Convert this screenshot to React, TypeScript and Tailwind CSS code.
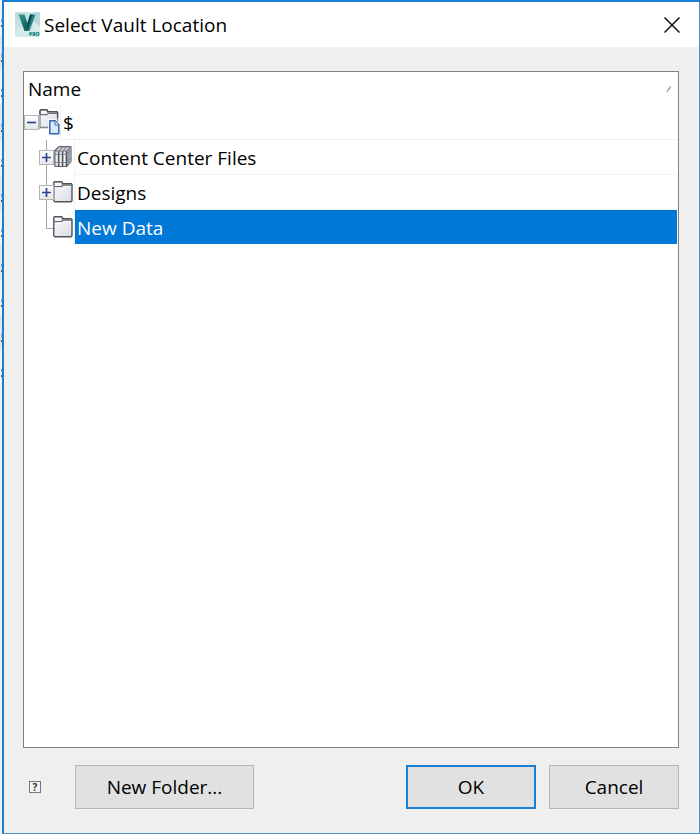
import { useState } from 'react';

type IconKind = 'vault' | 'library' | 'folder';

interface FolderNode {
  id: string;
  label: string;
  icon: IconKind;
  expandable: boolean;
}

const folders: FolderNode[] = [
  { id: 'content-center', label: 'Content Center Files', icon: 'library', expandable: true },
  { id: 'designs', label: 'Designs', icon: 'folder', expandable: true },
  { id: 'new-data', label: 'New Data', icon: 'folder', expandable: false },
];

const backgroundRows = Array.from({ length: 11 }, (_, index) => index);

function VaultLogo() {
  return (
    <svg width="25" height="25" viewBox="0 0 25 25" aria-hidden="true" className="shrink-0">
      <defs>
        <linearGradient id="logo-bg" x1="0" y1="0" x2="1" y2="1">
          <stop offset="0" stopColor="#b9dcdd" />
          <stop offset="1" stopColor="#e0f0f0" />
        </linearGradient>
        <linearGradient id="logo-left" x1="0" y1="0" x2="1" y2="1">
          <stop offset="0" stopColor="#31a09a" />
          <stop offset="1" stopColor="#0d4a4c" />
        </linearGradient>
      </defs>
      <rect width="25" height="25" fill="url(#logo-bg)" />
      <path d="M0 19 9 15 25 20V25H0Z" fill="#d3eaea" />
      <path d="M20 0H25V14L18 9Z" fill="#b3d9da" />
      <path d="M3.5 2.5H9.5L13 13 12.5 19H9.5Z" fill="url(#logo-left)" />
      <path d="M15 2.5H20.5L14.5 19H9.5Z" fill="#24837f" />
      <path d="M15 2.5H17.5L13 17 10.5 18.5Z" fill="#0d4a4c" />
      <text x="14" y="24" fontSize="5" fontWeight="800" fill="#087f83" fontFamily="Open Sans, sans-serif">
        PRO
      </text>
    </svg>
  );
}

function TreeIcon({ kind }: { kind: IconKind }) {
  if (kind === 'library') {
    return (
      <svg width="21" height="23" viewBox="0 0 21 23" aria-hidden="true" className="shrink-0">
        <path d="M1.8 4.5 6 .7H17.5L18 1.2V15.5L13.5 20.5H2.3L1.8 20Z" fill="#d3d5da" stroke="#62656e" strokeWidth="1.2" strokeLinejoin="round" />
        <path d="M13.5 5 18 1.2V15.5L13.5 20.5Z" fill="#9da0a8" />
        <path d="M5.7 5V20.5M9.6 5V20.5M13.5 5V20.5" stroke="#50535b" strokeWidth="1.3" />
        <path d="M2 5 6 1M5.7 5 10 1M9.6 5 13.8 1M13.5 5 17.8 1" stroke="#62656e" strokeWidth="1" />
        <path d="M2 5H13.5" stroke="#777a82" strokeWidth="1" />
        <path d="M3.7 7.5V18.5M7.6 7.5V18.5M11.5 7.5V18.5" stroke="#f4f5f7" strokeWidth="1" />
        <path d="M2 8.5H13.5L18 4.5M2 16.5H13.5L18 12" fill="none" stroke="#777a82" strokeWidth="0.8" />
      </svg>
    );
  }

  if (kind === 'vault') {
    return (
      <svg width="21" height="27" viewBox="0 0 21 27" aria-hidden="true" className="shrink-0">
        <path d="M1 19V1.5L1.8.7H7.7L8.5 1.5V2.7H17.8L18.6 3.5V18.5H1.5Z" fill="url(#folder-fill)" stroke="#858891" strokeWidth="1.3" />
        <path d="M1 5.8V1.5L1.8.7H7.7L8.5 1.5V2.7H17.8L18.6 3.5V9" fill="none" stroke="#50535b" strokeWidth="1.4" />
        <path d="M1.5 5.6H8L9.5 4.4H18" fill="none" stroke="#71747d" strokeWidth="1.1" />
        <path d="M10.8 11.8H16.2L19.8 15.8V24.8H10.8Z" fill="#d9e9fb" stroke="#fff" strokeWidth="3" />
        <path d="M10.8 11.8H16.2L19.8 15.8V24.8H10.8Z" fill="#d9e9fb" stroke="#3567ae" strokeWidth="1.5" strokeLinejoin="round" />
        <path d="M16 12V16H19.8" fill="#fff" stroke="#3567ae" strokeWidth="1" />
      </svg>
    );
  }

  return (
    <svg width="21" height="23" viewBox="0 0 21 23" aria-hidden="true" className="shrink-0">
      <path d="M.8 1.6 1.6.8H8.6L9.4 1.6V2.8H18.2L19 3.6V19.7L18 20.8H1.8L.8 19.8Z" fill="url(#folder-fill)" stroke="#50535b" strokeWidth="1.4" />
      <path d="M1.4 5.6H8.4L10 4.2H18.4" fill="none" stroke="#62656e" strokeWidth="1.2" />
      <path d="M2 7H9.2L10.6 5.7H18" fill="none" stroke="#fff" strokeWidth="1" />
    </svg>
  );
}

function Expander({ open, label, onClick }: { open: boolean; label: string; onClick: () => void }) {
  return (
    <button
      type="button"
      aria-label={`${open ? 'Collapse' : 'Expand'} ${label}`}
      onClick={onClick}
      className="relative flex size-[15px] shrink-0 items-center justify-center border border-[#b4b4b4] bg-linear-to-b from-white to-[#e6e6e6]"
    >
      <svg width="9" height="9" viewBox="0 0 9 9" aria-hidden="true">
        <path d={open ? 'M0 4.5H9' : 'M0 4.5H9M4.5 0V9'} stroke="#2b4596" strokeWidth="1.7" />
      </svg>
    </button>
  );
}

interface FolderRowProps {
  node: FolderNode;
  isLast: boolean;
  selected: boolean;
  open: boolean;
  onSelect: () => void;
  onToggle: () => void;
}

function FolderRow({ node, isLast, selected, open, onSelect, onToggle }: FolderRowProps) {
  return (
    <li role="treeitem" aria-selected={selected} className="flex h-[35px] items-center pl-[15px]">
      <div className="relative flex h-full w-[14px] shrink-0 items-center">
        <span className={`absolute left-[7px] top-0 border-l border-[#a6a6a6] ${isLast ? 'h-1/2' : 'h-full'}`} />
        <span className="absolute left-[7px] top-1/2 w-[7px] border-t border-[#a6a6a6]" />
        {node.expandable && <Expander open={open} label={node.label} onClick={onToggle} />}
      </div>
      <TreeIcon kind={node.icon} />
      <button
        type="button"
        onClick={onSelect}
        className={`mr-px h-full flex-1 border-b border-l border-[#f0f0f0] bg-clip-padding pl-[2px] pt-0.5 text-left ${
          selected ? 'border-b-white bg-[#0078d7] text-white' : ''
        }`}
      >
        {node.label}
      </button>
    </li>
  );
}

function FolderTree() {
  const [selectedId, setSelectedId] = useState('new-data');
  const [rootOpen, setRootOpen] = useState(true);
  const [openIds, setOpenIds] = useState<string[]>([]);

  const toggle = (id: string) => {
    setOpenIds((ids) => (ids.includes(id) ? ids.filter((item) => item !== id) : [...ids, id]));
  };

  return (
    <section className="flex-1 border border-[#828282] bg-white">
      <div className="flex h-[33px] items-center justify-between pl-1 pr-1.5">
        <span>Name</span>
        <svg width="6" height="8" viewBox="0 0 6 8" aria-hidden="true">
          <path d="M1 7 2.5 3.5M3 5 4.5 1" stroke="#8a8a8a" fill="none" />
        </svg>
      </div>
      <ul role="tree" aria-label="Vault folders">
        <li role="treeitem" aria-expanded={rootOpen} aria-selected={selectedId === 'root'}>
          <div className="flex h-[35px] items-center">
            <Expander open={rootOpen} label="$" onClick={() => setRootOpen(!rootOpen)} />
            <TreeIcon kind="vault" />
            <button
              type="button"
              onClick={() => setSelectedId('root')}
              className="h-full flex-1 border-b border-l border-[#f0f0f0] pl-[2px] pt-0.5 text-left"
            >
              $
            </button>
          </div>
          {rootOpen && (
            <ul role="group">
              {folders.map((node, index) => (
                <FolderRow
                  key={node.id}
                  node={node}
                  isLast={index === folders.length - 1}
                  selected={node.id === selectedId}
                  open={openIds.includes(node.id)}
                  onSelect={() => setSelectedId(node.id)}
                  onToggle={() => toggle(node.id)}
                />
              ))}
            </ul>
          )}
        </li>
      </ul>
    </section>
  );
}

function BackgroundWindow() {
  return (
    <div aria-hidden="true" className="w-[2px] shrink-0 overflow-hidden bg-[#eef0f2]">
      {backgroundRows.map((row) => (
        <div key={row} className="flex h-[35px] flex-col items-end justify-end gap-[3px] pb-2 odd:bg-[#f1f2f4] even:bg-[#e2e6ea]">
          <span className="h-[3px] w-px bg-[#6aaee6]" />
          <span className="h-[2px] w-px bg-[#5b5140]" />
        </div>
      ))}
    </div>
  );
}

export default function App() {
  return (
    <div className="flex min-h-screen font-['Open_Sans','Noto_Sans',sans-serif] text-[19px] leading-6 text-black">
      <svg width="0" height="0" aria-hidden="true" className="absolute">
        <defs>
          <linearGradient id="folder-fill" x1="0" y1="0" x2="1" y2="1">
            <stop offset="0" stopColor="#fdfdfe" />
            <stop offset="1" stopColor="#d9dbe3" />
          </linearGradient>
        </defs>
      </svg>
      <BackgroundWindow />
      <main className="flex flex-1 flex-col border-b border-l-2 border-r border-t-2 border-[#1a7fd4] border-b-[#4a93cc] border-r-[#4a93cc] bg-[#efefef]">
        <header className="flex h-[45px] items-center bg-white pl-[11px] pr-[18px]">
          <VaultLogo />
          <h1 className="flex-1 pl-1">Select Vault Location</h1>
          <button type="button" aria-label="Close" className="flex size-[18px] items-center justify-center">
            <svg width="16" height="16" viewBox="0 0 16 16" aria-hidden="true">
              <path d="M0.5 0.5 15.5 15.5M15.5 0.5 0.5 15.5" stroke="#111" strokeWidth="1.5" />
            </svg>
          </button>
        </header>
        <div className="flex flex-1 flex-col pb-6 pl-[19px] pr-5 pt-6">
          <FolderTree />
          <footer className="flex items-center pt-[17px]">
            <button
              type="button"
              aria-label="Help"
              className="ml-1.5 flex size-3 items-center justify-center border border-[#737780] bg-[#f4f4f4] text-[10px] font-bold leading-none text-[#333]"
            >
              ?
            </button>
            <button type="button" className="ml-[34px] h-11 w-[179px] border border-[#b5b5b5] bg-[#e1e1e1]">
              New Folder...
            </button>
            <button type="button" className="ml-auto h-11 w-[130px] border-2 border-[#1a7fd4] bg-[#e1e1e1]">
              OK
            </button>
            <button type="button" className="ml-[13px] h-11 w-[130px] border border-[#b5b5b5] bg-[#e1e1e1]">
              Cancel
            </button>
          </footer>
        </div>
      </main>
    </div>
  );
}
